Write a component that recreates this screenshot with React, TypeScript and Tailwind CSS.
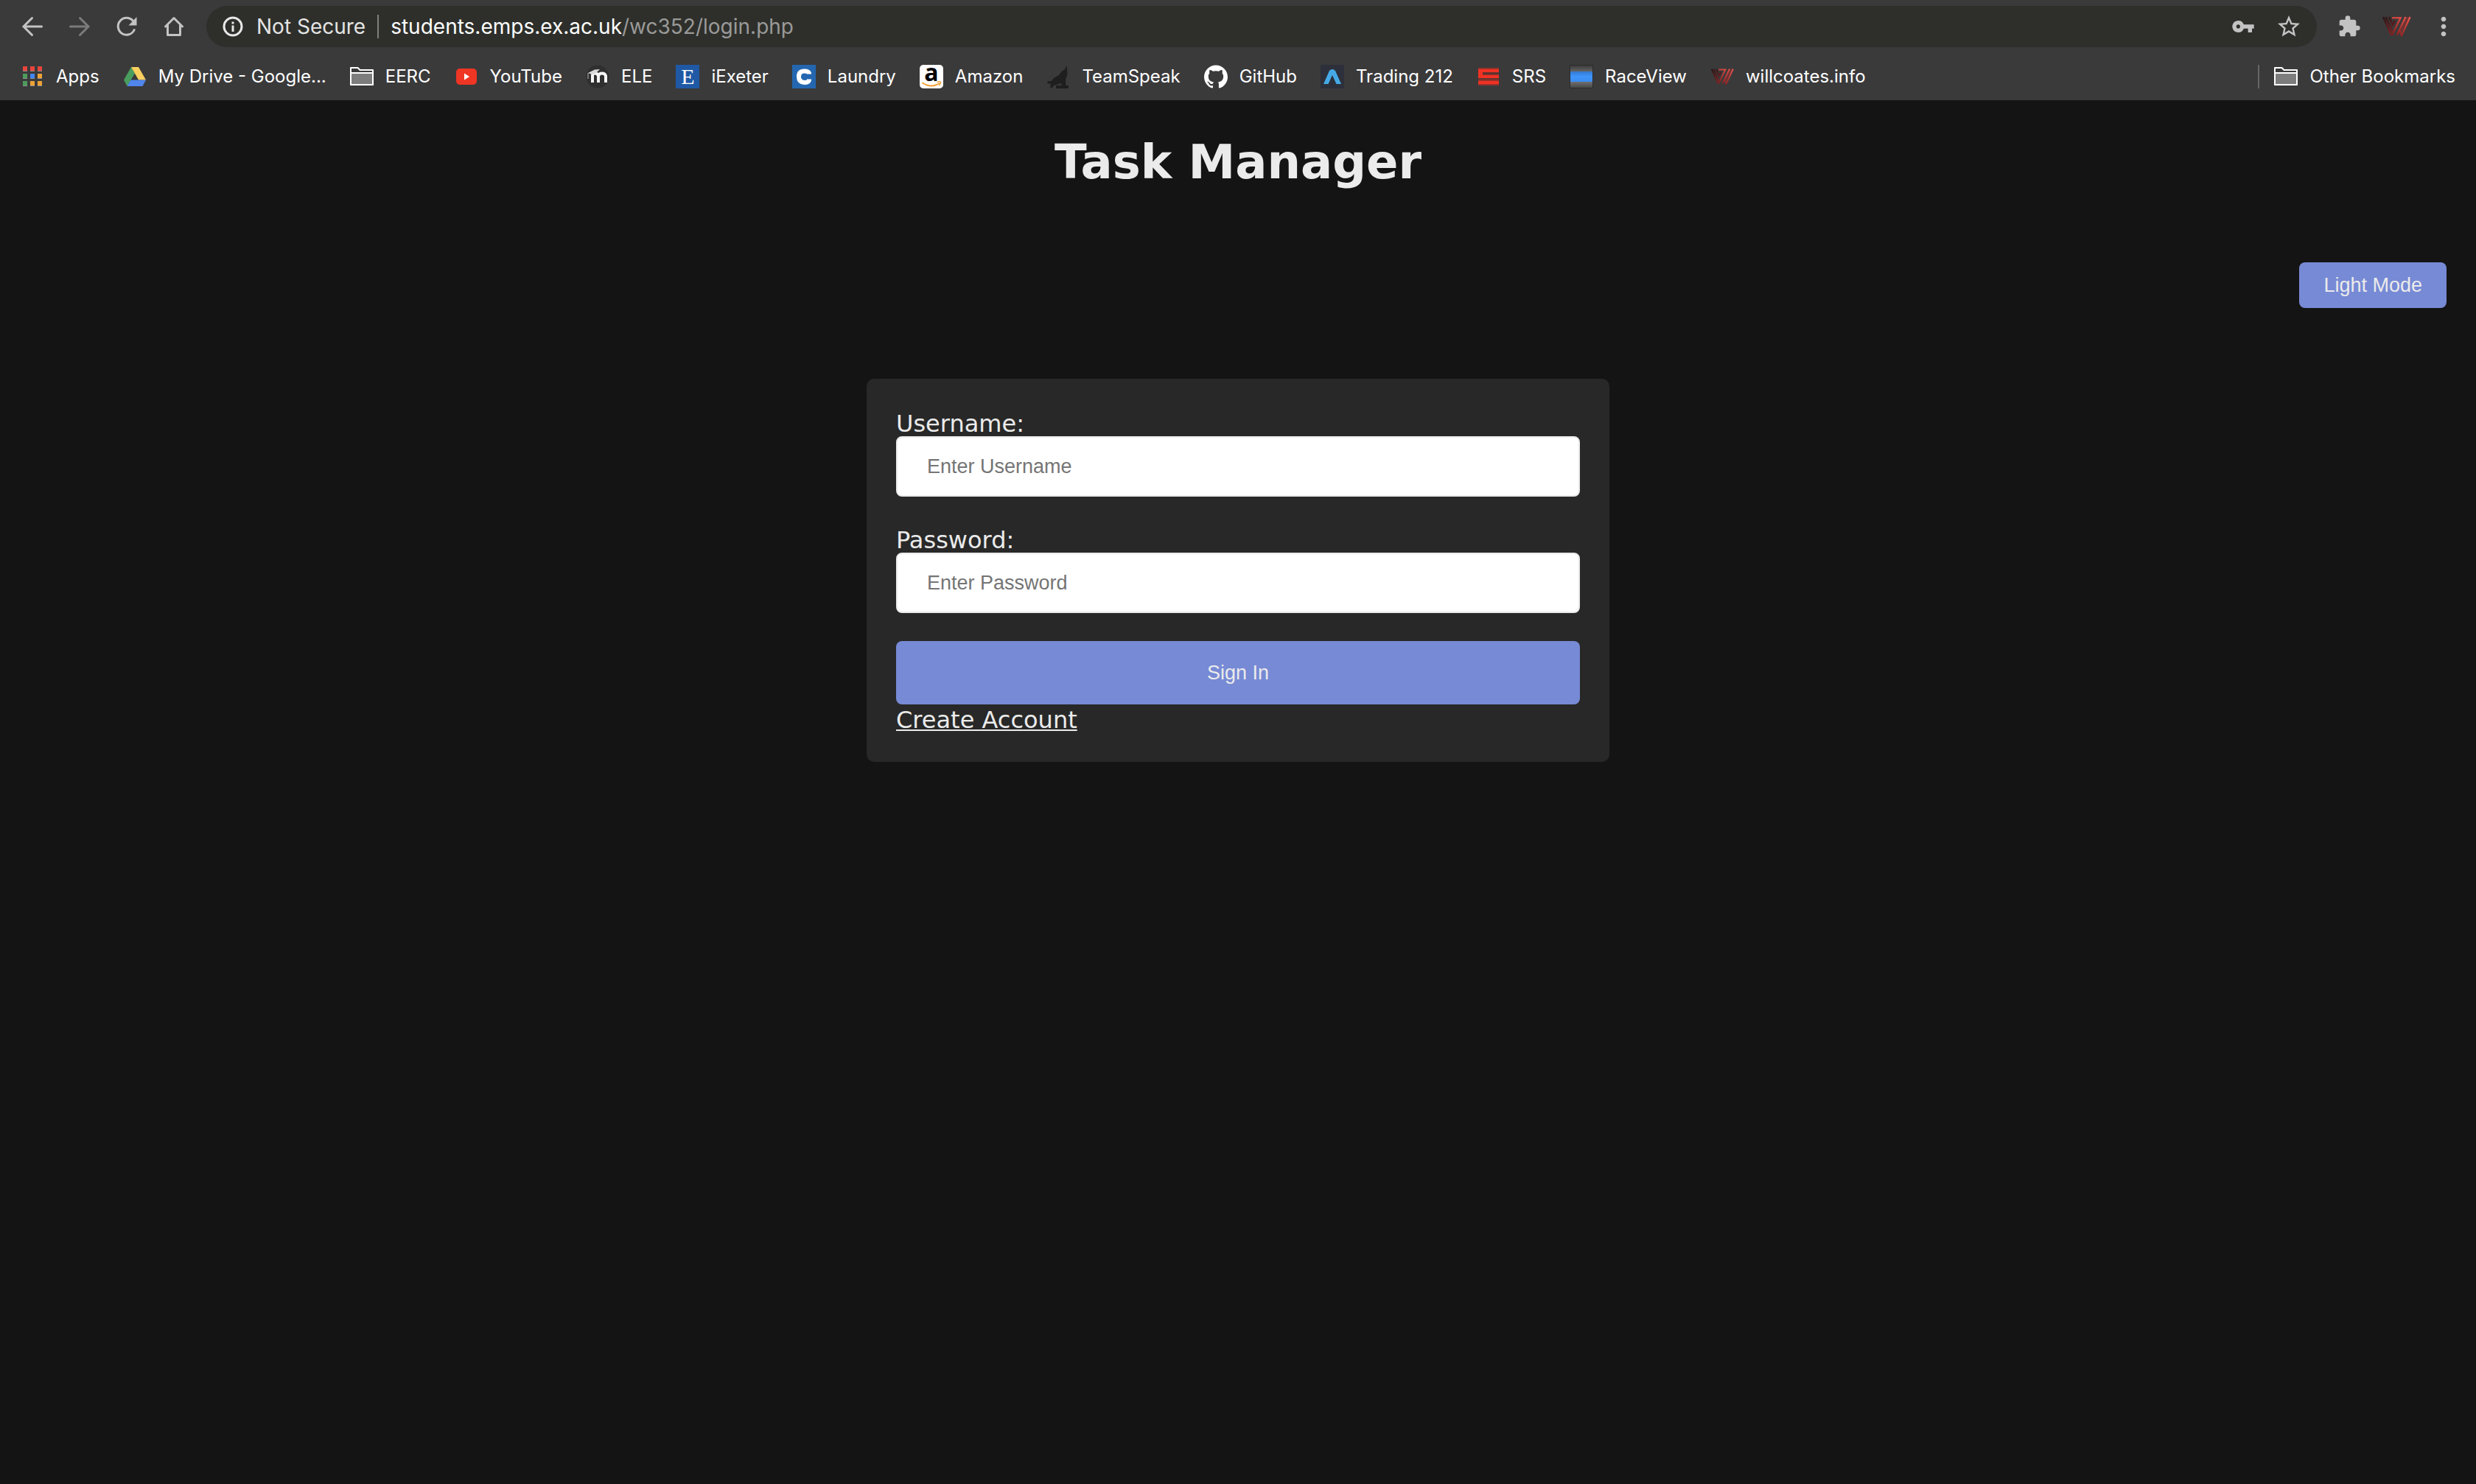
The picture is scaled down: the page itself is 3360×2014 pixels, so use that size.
import type { ReactNode } from 'react';
import { MdExtension, MdMoreVert, MdStarBorder, MdVpnKey } from 'react-icons/md';
import { SiGithub } from 'react-icons/si';

const BackIcon = () => (
  <svg className="size-8" viewBox="0 0 32 32" fill="none" stroke="currentColor" strokeWidth="3" strokeLinecap="round">
    <path d="M28.500 16H4.500M15.500 4.500L4 16L15.500 27.500" />
  </svg>
);

const ForwardIcon = () => (
  <svg className="size-8" viewBox="0 0 32 32" fill="none" stroke="currentColor" strokeWidth="3" strokeLinecap="round">
    <path d="M3.500 16H27.500M16.500 4.500L28 16L16.500 27.500" />
  </svg>
);

const ReloadIcon = () => (
  <svg className="size-8" viewBox="0 0 32 32" fill="none">
    <path d="M26.200 20.500A11.500 11.500 0 1 1 24.500 8.300" stroke="currentColor" strokeWidth="3" strokeLinecap="round" />
    <path d="M29.500 3V14.500H18.500Z" fill="currentColor" />
  </svg>
);

const HomeIcon = () => (
  <svg className="size-8" viewBox="0 0 32 32" fill="none" stroke="currentColor" strokeWidth="3" strokeLinecap="round" strokeLinejoin="round">
    <path d="M4.500 16L16 4.500L27.500 16" />
    <path d="M7.500 14.500V27.500H24.500V14.500" />
  </svg>
);

const InfoIcon = () => (
  <svg className="size-8" viewBox="0 0 32 32" fill="none">
    <circle cx="16" cy="16" r="12" stroke="currentColor" strokeWidth="3" />
    <path d="M14.500 9.500h3v3h-3zM14.500 14.500h3v8.500h-3z" fill="currentColor" />
  </svg>
);

const WLogo = ({ className }: { className: string }) => (
  <svg className={className} viewBox="0 0 40 28" fill="none" strokeWidth="2.500">
    <defs>
      <linearGradient id="wing" x1="20" y1="28" x2="36" y2="0" gradientUnits="userSpaceOnUse">
        <stop offset="0" stopColor="#7c1f1f" />
        <stop offset="1" stopColor="#f0564e" />
      </linearGradient>
      <linearGradient id="stem" x1="2" y1="0" x2="14" y2="28" gradientUnits="userSpaceOnUse">
        <stop offset="0" stopColor="#241414" />
        <stop offset="1" stopColor="#8c2424" />
      </linearGradient>
    </defs>
    <path d="M2 1L13 25.500M5.500 1L14.500 21" stroke="url(#stem)" />
    <path d="M10 1L15 12L18 6" stroke="url(#stem)" />
    <path d="M14 2.200H25.500L14 26" stroke="url(#wing)" />
    <path d="M32.500 1L20.500 26M38.500 1L27 26L23.500 18" stroke="url(#wing)" />
    <path d="M35.500 1L25 23" stroke="#8e2d2a" strokeWidth="1.500" />
  </svg>
);

const AppsIcon = () => (
  <svg className="size-8" viewBox="0 0 32 32">
    {[
      [3, 2, '#e8453c'], [13, 2, '#e8453c'], [23, 2, '#e8453c'],
      [3, 12, '#4d9c5b'], [13, 12, '#4285f4'], [23, 12, '#eea236'],
      [3, 22, '#4d9c5b'], [13, 22, '#eea236'], [23, 22, '#eea236'],
    ].map(([x, y, fill]) => (
      <g key={`${x}-${y}`}>
        <rect x={x} y={Number(y) + 1} width="6" height="6" fill="#8f8f8f" />
        <rect x={x} y={y} width="6" height="6" fill={String(fill)} />
      </g>
    ))}
  </svg>
);

const DriveIcon = () => (
  <svg className="size-8" viewBox="0 0 32 32">
    <path d="M11 3L1 20.500L5.500 29L16 11.500Z" fill="#4a9d5e" />
    <path d="M11 3H21L31 20.500H21Z" fill="#f9cf5f" />
    <path d="M10.500 20.500H31L26.500 29H5.500Z" fill="#5086ec" />
  </svg>
);

const FolderIcon = () => (
  <svg className="size-8" viewBox="0 0 32 32" stroke="#fff" strokeWidth="2" strokeLinejoin="round">
    <path d="M1 27V4H10.500L13.500 7H31V27Z" fill="#3a3a3b" />
    <path d="M1 11H31V27H1Z" fill="#7d7d7d" />
  </svg>
);

const YouTubeIcon = () => (
  <svg className="size-8" viewBox="0 0 32 32">
    <rect x="2" y="5" width="28" height="22" rx="5" fill="#ef3524" />
    <path d="M13 11.500V20.500L20 16Z" fill="#fff" />
  </svg>
);

const MoodleIcon = () => (
  <svg className="size-8" viewBox="0 0 32 32" fill="none">
    <circle cx="16" cy="16" r="15.500" fill="#2f2f2f" />
    <path d="M9 24V14.500Q9 11.500 12.500 11.500T17 15V24M17 24V15Q18 11.500 22 11.500T27 15V24" stroke="#f5f5f5" strokeWidth="4" />
    <path d="M3 11L12 6.500L19 6L14 11L8 13Z" fill="#d8d8d8" />
    <path d="M3 11V19" stroke="#8a8a8a" strokeWidth="1.500" />
  </svg>
);

const ExeterIcon = () => (
  <span className="flex size-8 items-center justify-center bg-[#1f59a5] font-['Liberation_Serif',serif] text-[30px] leading-8 text-white">E</span>
);

const LaundryIcon = () => (
  <svg className="size-8" viewBox="0 0 32 32" fill="none">
    <rect width="32" height="32" fill="#2467b0" />
    <path d="M23 12.500V11.500Q22 8.500 16.500 8.500Q9 8.500 9 16T16.500 24Q22 24 23 21V19.500" stroke="#fff" strokeWidth="6" />
  </svg>
);

const AmazonIcon = () => (
  <svg className="size-8" viewBox="0 0 32 32">
    <rect width="32" height="32" rx="5" fill="#fff" />
    <text x="16" y="22" textAnchor="middle" className="fill-black font-['Open_Sans',sans-serif] text-[32px] font-bold">a</text>
    <path d="M4 24.500Q15 32 26 25.500" fill="none" stroke="#f3a033" strokeWidth="2" strokeLinecap="round" />
    <path d="M23.500 23.500Q29 22 28.500 24T26.500 28" fill="none" stroke="#f3a033" strokeWidth="1.500" />
  </svg>
);

const WolfIcon = () => (
  <svg className="size-8" viewBox="0 0 32 32" fill="#1e1e1e">
    <path d="M27.500 1L25 6L20.500 9L17 14L10 18L7 22L2 22L1 25L6 26L5 31H8L10 28L15 26.500L20 25L21 28H13V32H30V28H26.500L26 20L28.500 13Z" />
  </svg>
);

const TradingIcon = () => (
  <svg className="size-8" viewBox="0 0 32 32">
    <rect width="32" height="32" fill="#2d303a" />
    <path d="M4 26L12 8Q16 4 20 8L28 26H21.500L16 14L10.500 26Z" fill="#45a9e6" />
  </svg>
);

const SrsIcon = () => (
  <svg className="size-8" viewBox="0 0 32 32">
    <path d="M2 4H30V28H2Z" fill="#97322b" />
    <path d="M2 6H30V10H8V14H30V18H2Z" fill="#f03223" />
    <path d="M8 10H30V13H8Z" fill="#613330" />
    <path d="M2 18H30V20H2Z" fill="#613330" />
    <path d="M2 22H30V26H2Z" fill="#f03223" />
  </svg>
);

const RaceViewIcon = () => (
  <span className="flex size-8 flex-col border border-[#2b2b2b]">
    <span className="h-2 bg-linear-to-b from-[#3d3d3d] to-[#656565]" />
    <span className="h-3.5 bg-linear-to-b from-[#3478d0] via-[#3f95fa] to-[#3b8cf0]" />
    <span className="h-2 bg-linear-to-b from-[#707070] to-[#484848]" />
  </span>
);

const bookmarks: { label: string; icon: ReactNode }[] = [
  { label: 'Apps', icon: <AppsIcon /> },
  { label: 'My Drive - Google...', icon: <DriveIcon /> },
  { label: 'EERC', icon: <FolderIcon /> },
  { label: 'YouTube', icon: <YouTubeIcon /> },
  { label: 'ELE', icon: <MoodleIcon /> },
  { label: 'iExeter', icon: <ExeterIcon /> },
  { label: 'Laundry', icon: <LaundryIcon /> },
  { label: 'Amazon', icon: <AmazonIcon /> },
  { label: 'TeamSpeak', icon: <WolfIcon /> },
  { label: 'GitHub', icon: <SiGithub className="size-8" /> },
  { label: 'Trading 212', icon: <TradingIcon /> },
  { label: 'SRS', icon: <SrsIcon /> },
  { label: 'RaceView', icon: <RaceViewIcon /> },
  { label: 'willcoates.info', icon: <WLogo className="size-8" /> },
];

const Bookmark = ({ label, icon }: { label: string; icon: ReactNode }) => (
  <a href="#" className="flex shrink-0 items-center gap-4 whitespace-nowrap">
    {icon}
    {label}
  </a>
);

const Browser = () => (
  <header className="bg-[#3a3a3b] font-['Inter',sans-serif] text-white">
    <div className="flex h-[72px] items-center pr-6 pl-7 text-[#c3c3c3]">
      <nav className="flex gap-8" aria-label="History">
        <button type="button" aria-label="Back"><BackIcon /></button>
        <button type="button" aria-label="Forward" className="text-[#7b7b7b]"><ForwardIcon /></button>
        <button type="button" aria-label="Reload"><ReloadIcon /></button>
        <button type="button" aria-label="Home"><HomeIcon /></button>
      </nav>
      <div className="ml-7 flex h-14 flex-1 items-center rounded-full bg-[#2e2f2b] px-5 text-[28px]">
        <span className="text-[#e8e8e8]"><InfoIcon /></span>
        <span className="ml-4 text-[#e4e4e4]">Not Secure</span>
        <span className="mx-4 h-8 w-0.5 bg-[#7f807d]" />
        <span className="flex-1 text-[#9a9a98]">
          <span className="text-white">students.emps.ex.ac.uk</span>/wc352/login.php
        </span>
        <button type="button" aria-label="Saved passwords"><MdVpnKey className="size-8" /></button>
        <button type="button" aria-label="Bookmark this page" className="ml-7"><MdStarBorder className="size-9" /></button>
      </div>
      <button type="button" aria-label="Extensions" className="ml-7"><MdExtension className="size-8" /></button>
      <button type="button" aria-label="Profile" className="ml-7"><WLogo className="h-7 w-10" /></button>
      <button type="button" aria-label="Menu" className="ml-6"><MdMoreVert className="size-10" /></button>
    </div>
    <div className="flex h-16 items-center px-7 text-[24px]">
      <nav className="flex flex-1 gap-8" aria-label="Bookmarks">
        {bookmarks.map((b) => (
          <Bookmark key={b.label} {...b} />
        ))}
      </nav>
      <span className="mr-5 h-8 w-0.5 bg-[#666]" />
      <Bookmark label="Other Bookmarks" icon={<FolderIcon />} />
    </div>
  </header>
);

const fieldClass =
  "block h-[82px] w-full rounded-lg border-2 border-[#ebebeb] bg-white px-10 font-['Liberation_Sans',sans-serif] text-[27px] text-black placeholder:text-[#757575]";
const buttonClass = "rounded-lg bg-[#778ad5] font-['Liberation_Sans',sans-serif] text-[27px] text-[#ebebeb]";

export default function App() {
  return (
    <div className="min-h-screen bg-[#141414] font-['DejaVu_Sans',sans-serif] text-[32px] text-[#ebebeb]">
      <Browser />
      <main className="pt-[46px]">
        <h1 className="text-center text-[64px] leading-[76px] font-bold">Task Manager</h1>
        <div className="mt-[98px] flex justify-end pr-10">
          <button type="button" className={`${buttonClass} h-[62px] px-[33px]`}>Light Mode</button>
        </div>
        <form className="mx-auto mt-24 w-[30%] rounded-[10px] bg-[#282828] px-10 pt-11 pb-9">
          <label htmlFor="username" className="block leading-[34px]">Username:</label>
          <input id="username" type="text" placeholder="Enter Username" className={fieldClass} />
          <label htmlFor="password" className="mt-[42px] block leading-[34px]">Password:</label>
          <input id="password" type="password" placeholder="Enter Password" className={fieldClass} />
          <button type="submit" className={`${buttonClass} mt-[38px] block h-[86px] w-full`}>Sign In</button>
          <a href="#" className="block w-fit leading-[42px] underline decoration-2 underline-offset-2">Create Account</a>
        </form>
      </main>
    </div>
  );
}
